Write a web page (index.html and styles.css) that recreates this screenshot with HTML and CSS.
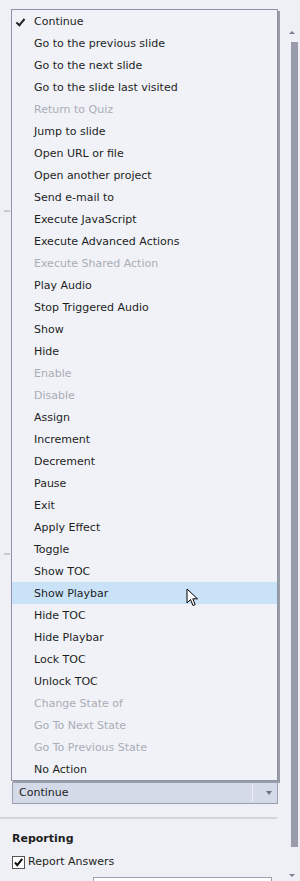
FILE: index.html
```html
<!DOCTYPE html>
<html lang="en">
<head>
    <meta charset="UTF-8">
    <title>Actions</title>
    <link rel="stylesheet" href="styles.css">
</head>
<body>
    <div class="page">
        <div class="panel">
            <span class="ghost ghost--a"></span>
            <span class="ghost ghost--b"></span>
            <ul class="menu">
                <li class="menu__item menu__item--checked">Continue</li>
                <li class="menu__item">Go to the previous slide</li>
                <li class="menu__item">Go to the next slide</li>
                <li class="menu__item">Go to the slide last visited</li>
                <li class="menu__item menu__item--disabled">Return to Quiz</li>
                <li class="menu__item">Jump to slide</li>
                <li class="menu__item">Open URL or file</li>
                <li class="menu__item">Open another project</li>
                <li class="menu__item">Send e-mail to</li>
                <li class="menu__item">Execute JavaScript</li>
                <li class="menu__item">Execute Advanced Actions</li>
                <li class="menu__item menu__item--disabled">Execute Shared Action</li>
                <li class="menu__item">Play Audio</li>
                <li class="menu__item">Stop Triggered Audio</li>
                <li class="menu__item">Show</li>
                <li class="menu__item">Hide</li>
                <li class="menu__item menu__item--disabled">Enable</li>
                <li class="menu__item menu__item--disabled">Disable</li>
                <li class="menu__item">Assign</li>
                <li class="menu__item">Increment</li>
                <li class="menu__item">Decrement</li>
                <li class="menu__item">Pause</li>
                <li class="menu__item">Exit</li>
                <li class="menu__item">Apply Effect</li>
                <li class="menu__item">Toggle</li>
                <li class="menu__item">Show TOC</li>
                <li class="menu__item menu__item--hover">Show Playbar
                    <svg class="cursor" width="14" height="20" viewBox="0 0 14 20">
                        <path d="M1 1 L1 15 L4.5 11.5 L7 17.5 L9.2 16.6 L6.8 10.8 L11.5 10.8 Z" fill="#fff" stroke="#000" stroke-width="1" stroke-linejoin="miter"/>
                    </svg>
                </li>
                <li class="menu__item">Hide TOC</li>
                <li class="menu__item">Hide Playbar</li>
                <li class="menu__item">Lock TOC</li>
                <li class="menu__item">Unlock TOC</li>
                <li class="menu__item menu__item--disabled">Change State of</li>
                <li class="menu__item menu__item--disabled">Go To Next State</li>
                <li class="menu__item menu__item--disabled">Go To Previous State</li>
                <li class="menu__item">No Action</li>
            </ul>
            <div class="combo">
                <span class="combo__value">Continue</span>
                <span class="combo__arrow"></span>
            </div>
            <hr class="divider">
            <div class="section">
                <div class="section__title">Reporting</div>
                <label class="check">
                    <span class="check__box">
                        <svg width="11" height="11" viewBox="0 0 11 11">
                            <path d="M2 5.5 L4.3 8.2 L9.2 1.8" fill="none" stroke="#111" stroke-width="2"/>
                        </svg>
                    </span>
                    Report Answers
                </label>
                <div class="field"></div>
            </div>
        </div>
        <div class="scrollbar">
            <span class="scrollbar__up"></span>
            <span class="scrollbar__thumb"></span>
            <span class="scrollbar__down"></span>
        </div>
    </div>
</body>
</html>
```

FILE: styles.css
```css
body {
    margin: 0;
    background: #eef0f5;
    font-family: "DejaVu Sans", Tahoma, sans-serif;
    font-size: 11px;
    color: #1e1e1e;
}

.page {
    display: flex;
    width: 300px;
    height: 881px;
    overflow: hidden;
}

.panel {
    position: relative;
    width: 278px;
    padding-top: 9px;
}

.ghost {
    position: absolute;
    left: 4px;
    width: 6px;
    height: 2px;
    background: #c6cad3;
}

.ghost--a { top: 210px; }
.ghost--b { top: 553px; }

.menu {
    list-style: none;
    margin: 0 0 0 11px;
    padding: 0;
    width: 265px;
    background: #f0f2f7;
    border: 1px solid #8d93a6;
    box-shadow: 2px 2px 0 #9a9da6;
}

.menu__item {
    position: relative;
    height: 22px;
    line-height: 23px;
    padding-left: 22px;
    white-space: nowrap;
}

.menu__item--disabled {
    color: #a9adb6;
}

.menu__item--hover {
    background: #c9e2f8;
}

.menu__item--checked::before {
    content: "";
    position: absolute;
    left: 6px;
    top: 7px;
    width: 3px;
    height: 7px;
    border-right: 2px solid #222;
    border-bottom: 2px solid #222;
    transform: rotate(40deg);
}

.cursor {
    position: absolute;
    left: 174px;
    top: 6px;
}

.combo {
    display: flex;
    align-items: center;
    margin: 1px 0 0 12px;
    width: 264px;
    height: 20px;
    background: #d4dae8;
    border: 1px solid #9aa0b1;
}

.combo__value {
    flex: 1;
    padding-left: 6px;
    border-right: 1px solid #eef0f6;
    margin-right: 13px;
    height: 18px;
    line-height: 18px;
}

.combo__arrow {
    width: 0;
    height: 0;
    margin-right: 5px;
    border-left: 3px solid transparent;
    border-right: 3px solid transparent;
    border-top: 4px solid #6c7283;
}

.divider {
    margin: 13px 0 0;
    width: 277px;
    border: 0;
    border-top: 2px solid #d3d6dd;
}

.section {
    padding: 12px 0 0 12px;
}

.section__title {
    font-weight: bold;
    line-height: 16px;
}

.check {
    display: flex;
    align-items: center;
    gap: 3px;
    margin-top: 8px;
    line-height: 14px;
}

.check__box {
    display: flex;
    width: 11px;
    height: 11px;
    border: 1px solid #555;
    background: #fff;
}

.field {
    margin: 8px 0 0 81px;
    width: 177px;
    height: 10px;
    border: 1px solid #9aa0b1;
    background: #fff;
}

.scrollbar {
    position: relative;
    flex: 1;
}

.scrollbar__up,
.scrollbar__down {
    position: absolute;
    left: 11px;
    width: 0;
    height: 0;
    border-left: 3px solid transparent;
    border-right: 3px solid transparent;
}

.scrollbar__up {
    top: 31px;
    border-bottom: 3px solid #7b8091;
}

.scrollbar__down {
    top: 874px;
    border-top: 3px solid #7b8091;
}

.scrollbar__thumb {
    position: absolute;
    left: 13px;
    top: 42px;
    width: 7px;
    height: 805px;
    background: #989cab;
}
```
